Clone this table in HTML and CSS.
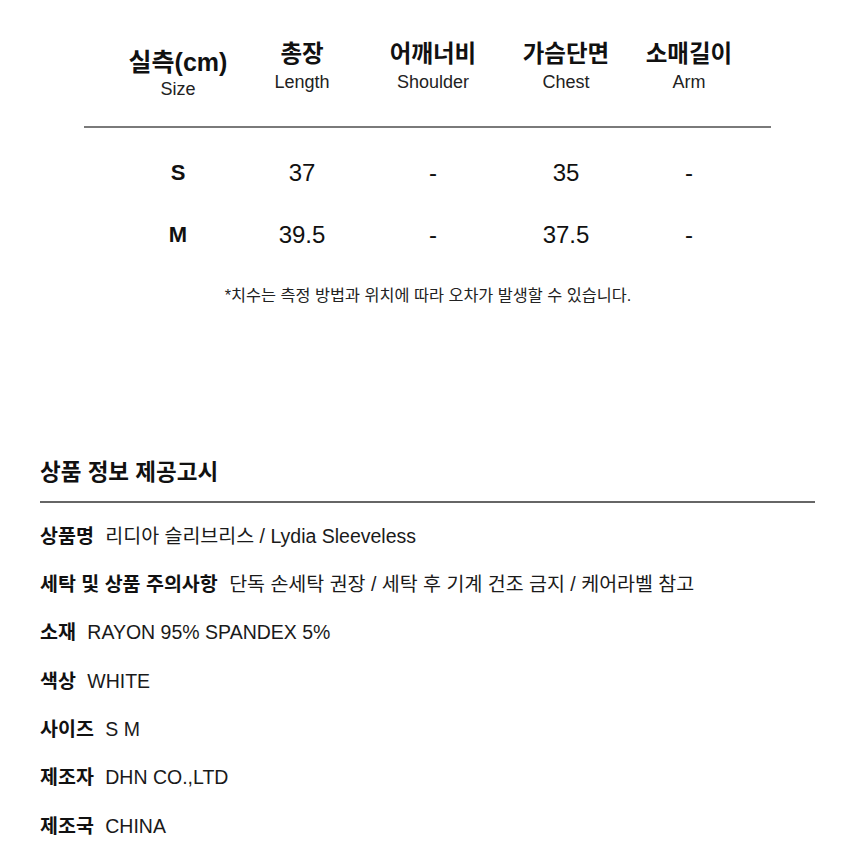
FILE: index.html
```html
<!DOCTYPE html>
<html lang="ko">
<head>
<meta charset="utf-8">
<link rel="stylesheet" href="styles.css">
</head>
<body>
<div class="page">
  <section class="size">
    <div class="grid head">
      <div class="hcell first"><div class="ko">실측(cm)</div><div class="en">Size</div></div>
      <div class="hcell"><div class="ko">총장</div><div class="en">Length</div></div>
      <div class="hcell"><div class="ko">어깨너비</div><div class="en">Shoulder</div></div>
      <div class="hcell"><div class="ko">가슴단면</div><div class="en">Chest</div></div>
      <div class="hcell"><div class="ko">소매길이</div><div class="en">Arm</div></div>
    </div>
    <div class="rule"></div>
    <div class="grid row">
      <div class="sz">S</div><div>37</div><div>-</div><div>35</div><div>-</div>
    </div>
    <div class="grid row">
      <div class="sz">M</div><div>39.5</div><div>-</div><div>37.5</div><div>-</div>
    </div>
    <p class="note">*치수는 측정 방법과 위치에 따라 오차가 발생할 수 있습니다.</p>
  </section>
  <section class="info">
    <h2 class="title">상품 정보 제공고시</h2>
    <div class="rule2"></div>
    <ul class="list">
      <li><b>상품명</b> 리디아 슬리브리스 / Lydia Sleeveless</li>
      <li><b>세탁 및 상품 주의사항</b> 단독 손세탁 권장 / 세탁 후 기계 건조 금지 / 케어라벨 참고</li>
      <li><b>소재</b> RAYON 95% SPANDEX 5%</li>
      <li><b>색상</b> WHITE</li>
      <li><b>사이즈</b> S M</li>
      <li><b>제조자</b> DHN CO.,LTD</li>
      <li><b>제조국</b> CHINA</li>
    </ul>
  </section>
</div>
</body>
</html>
```

FILE: styles.css
```css
* { box-sizing: border-box; }
html, body { margin: 0; padding: 0; background: #fff; }
body {
  font-family: "Liberation Sans", "Noto Sans CJK KR", sans-serif;
  color: #111;
}
.page { width: 856px; height: 856px; overflow: hidden; }
.size { margin-left: 84px; width: 687px; padding-top: 37px; }
.grid {
  display: grid;
  grid-template-columns: 124px 124px 138px 128px 118px;
  padding-left: 32px;
  text-align: center;
}
.hcell { display: flex; flex-direction: column; align-items: center; }
.hcell .ko { font-size: 23.5px; font-weight: 700; line-height: 34px; white-space: nowrap; }
.hcell .en { font-size: 18px; line-height: 22px; color: #222; margin-top: 0; }
.hcell.first { padding-top: 8px; }
.hcell.first .ko { font-size: 25px; }
.hcell.first .en { margin-top: -1px; }
.rule { height: 2px; background: #7a7a7a; margin-top: 26px; }
.row { font-size: 24px; line-height: 30px; }
.rule + .row { margin-top: 30px; }
.row + .row { margin-top: 32px; }
.sz { font-weight: 700; font-size: 22px; }
.note {
  margin: 35px 0 0 -84px;
  width: 856px;
  text-align: center;
  font-size: 16.3px;
  line-height: 20px;
  color: #222;
}
.info { margin: 154px 41px 0 40px; }
.title { margin: 0; font-size: 22.5px; font-weight: 700; line-height: 28px; }
.rule2 { height: 1.5px; background: #666; margin-top: 14px; }
.list { list-style: none; margin: 21px 0 0; padding: 0; }
.list li { font-size: 19.5px; line-height: 24px; height: 48.4px; white-space: nowrap; color: #1a1a1a; }
.list b { font-weight: 700; margin-right: 6px; color: #111; }
```
